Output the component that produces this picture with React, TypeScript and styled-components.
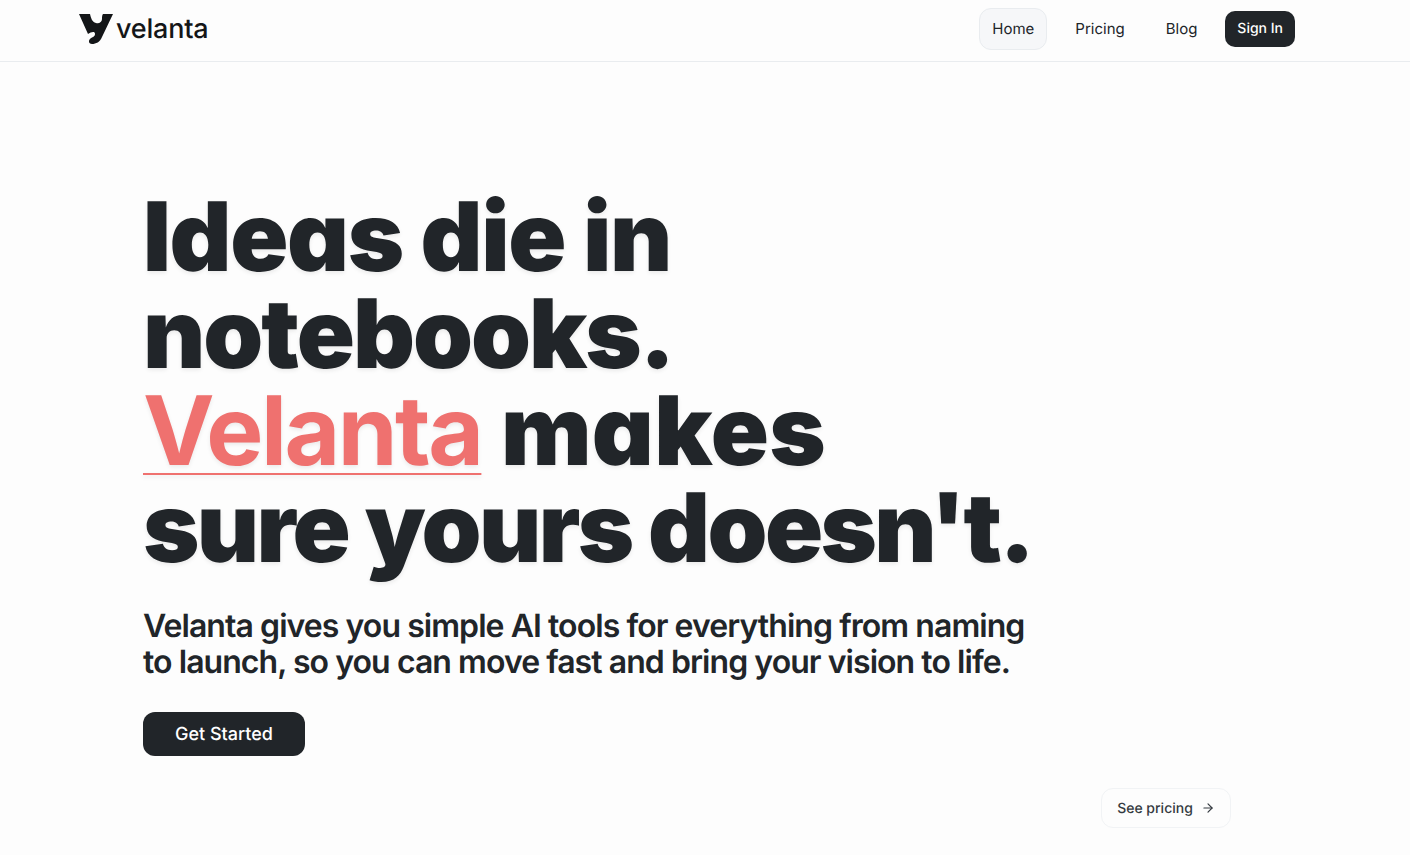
import React from "react";
import styled, { createGlobalStyle } from "styled-components";
import { ArrowRight } from "lucide-react";

const Global = createGlobalStyle`
  html, body {
    margin: 0;
    background: #fdfdfd;
    color: #212529;
    font-family: Inter, "Liberation Sans", sans-serif;
    text-rendering: geometricPrecision;
    overflow: hidden;
  }
  * { box-sizing: border-box; }
`;

const Page = styled.div`
  width: 1410px;
  height: 855px;
  display: flex;
  flex-direction: column;
`;

const Header = styled.header`
  height: 62px;
  flex: none;
  border-bottom: 1px solid #e9ecef;
  padding: 0 115px 0 79px;
  display: flex;
  align-items: center;
  justify-content: space-between;
`;

const Brand = styled.a`
  display: flex;
  align-items: center;
  gap: 3px;
  margin-top: -4px;
  color: #141618;
  font-size: 27px;
  font-weight: 500;
  letter-spacing: -0.2px;
`;

const Nav = styled.nav`
  display: flex;
  align-items: center;
  margin-top: -4px;
`;

const NavLink = styled.a<{ $active?: boolean }>`
  height: 42px;
  padding: 0 12px;
  margin-right: 15px;
  display: flex;
  align-items: center;
  font-size: 15px;
  border-radius: 12px;
  border: 1px solid ${(p) => (p.$active ? "#e9ecef" : "transparent")};
  background: ${(p) => (p.$active ? "#f6f7f9" : "transparent")};
`;

const SignIn = styled.a`
  height: 36px;
  padding: 0 12px;
  display: flex;
  align-items: center;
  font-size: 14px;
  font-weight: 500;
  color: #fff;
  background: #212529;
  border-radius: 10px;
`;

const Hero = styled.main`
  flex: 1;
  padding: 127px 143px 0;
  display: flex;
  flex-direction: column;
  align-items: flex-start;
`;

const Title = styled.h1`
  margin: 0;
  font-size: 96px;
  line-height: 97px;
  font-weight: 900;
  letter-spacing: -2.6px;
  font-feature-settings: "cv11" 1;
  text-shadow: 0 2px 4px rgba(0, 0, 0, 0.08);
`;

// Each heading line gets its own tracking so the line ends land in the right place
const Tracked = styled.span<{ $tracking: number }>`
  letter-spacing: ${(p) => p.$tracking}px;
`;

const Accent = styled.span`
  color: #ef716f;
  font-weight: 700;
  letter-spacing: -2.5px;
  font-feature-settings: "cv11" 0;
  margin-right: 3px;
  text-decoration: underline 2px #ef716f;
  text-underline-offset: 8px;
  text-decoration-skip-ink: none;
`;

const Lead = styled.p`
  margin: 31px 0 0;
  width: 900px;
  font-size: 32px;
  line-height: 36px;
  font-weight: 600;
  letter-spacing: -0.94px;
`;

const Cta = styled.a`
  margin-top: 32px;
  width: 162px;
  height: 44px;
  display: flex;
  align-items: center;
  justify-content: center;
  font-size: 18px;
  font-weight: 500;
  color: #fff;
  background: #212529;
  border-radius: 12px;
`;

const PricingLink = styled.a`
  align-self: flex-end;
  margin: 32px 36px 0 0;
  width: 130px;
  height: 40px;
  display: flex;
  align-items: center;
  justify-content: center;
  gap: 8px;
  font-size: 14px;
  font-weight: 500;
  color: #343a40;
  border: 1px solid #f1f3f5;
  border-radius: 12px;
`;

function Logo() {
  return (
    <svg width="34" height="30" viewBox="0 0 34 30" fill="#141618">
      <path d="M0 0 H11 C12 4 13 8 17 9 C20 10 23 8 23 5 C23 3 23 1 24 0 H34 L23 23 C21 28 17 30 13 30 C10 30 9 27 11 25 C13 23 16 23 16 20 C16 17 12 18 9 20 Z" />
    </svg>
  );
}

export default function App() {
  return (
    <Page>
      <Global />
      <Header>
        <Brand>
          <Logo />
          velanta
        </Brand>
        <Nav>
          <NavLink $active>Home</NavLink>
          <NavLink>Pricing</NavLink>
          <NavLink>Blog</NavLink>
          <SignIn>Sign In</SignIn>
        </Nav>
      </Header>
      <Hero>
        <Title>
          <Tracked $tracking={-1.35}>Ideas die in</Tracked>
          <br />
          <Tracked $tracking={-2}>notebooks.</Tracked>
          <br />
          <Accent>Velanta</Accent> <Tracked $tracking={0.4}>makes</Tracked>
          <br />
          sure yours doesn't.
        </Title>
        <Lead>
          Velanta gives you simple AI tools for everything from naming to launch, so you can move
          fast and bring your vision to life.
        </Lead>
        <Cta>Get Started</Cta>
        <PricingLink>
          See pricing
          <ArrowRight size={14} />
        </PricingLink>
      </Hero>
    </Page>
  );
}
